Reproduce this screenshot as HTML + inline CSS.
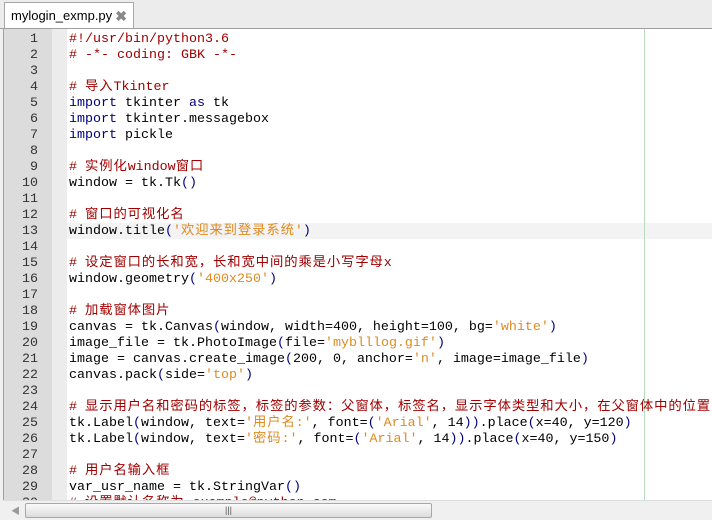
<!DOCTYPE html>
<html><head><meta charset="utf-8"><style>
body{margin:0;width:712px;height:520px;overflow:hidden;background:#f0f0f0;position:relative;font-family:"Liberation Sans","Noto Sans CJK SC",sans-serif}
.tabbar{position:absolute;left:0;top:0;width:712px;height:28px;background:#ececec;border-bottom:1px solid #a0a0a0}
.tab{position:absolute;left:4px;top:2px;width:130px;height:26px;background:#fff;border:1px solid #a8a8a8;border-bottom:none;font-size:13px;line-height:26px;padding-left:6px;box-sizing:border-box;color:#000}
.tab .x{position:absolute;right:6px;top:0;color:#888;font-weight:bold;font-size:14px}
.ed{position:absolute;left:3px;top:29px;width:709px;height:471px;background:#fff;overflow:hidden;border-left:1px solid #a0a0a0}
.g1{position:absolute;left:0;top:0;width:48px;height:100%;background:#dcdcdc}
.g2{position:absolute;left:48px;top:0;width:15px;height:100%;background:#ececec}
.vl{position:absolute;left:640px;top:0;width:1px;height:100%;background:#b8dcc0}
.hl{position:absolute;left:63px;top:194px;width:650px;height:16px;background:#f3f3f3}
.nums{position:absolute;left:0;top:3px;width:34px;text-align:right;font:13.33px/16px "Liberation Mono",monospace;color:#333}
.code{position:absolute;left:65px;top:3px;font:13.33px/16px "Liberation Mono","Noto Sans CJK SC",monospace;color:#000;white-space:pre}
.z{letter-spacing:0.9px}
.c{color:#a00000}.k{color:#00007f}.s{color:#e08a20}.p{color:#00007f}
.sb{position:absolute;left:3px;top:500px;width:709px;height:19px;background:#f0f0f0;border-top:1px solid #ddd}
.th{position:absolute;left:22px;top:2px;width:405px;height:13px;background:linear-gradient(#fafafa,#dcdcdc);border:1px solid #a8a8a8;border-radius:2px;text-align:center;font-size:9px;line-height:13px;color:#555}
.arr{position:absolute;left:8px;top:3px;font-size:9px;color:#999}
</style></head><body>
<div class="tabbar"><div class="tab">mylogin_exmp.py<span class="x">✖</span></div></div>
<div class="ed">
<div class="g1"></div><div class="g2"></div><div class="hl"></div><div class="vl"></div>
<div class="nums">1<br>2<br>3<br>4<br>5<br>6<br>7<br>8<br>9<br>10<br>11<br>12<br>13<br>14<br>15<br>16<br>17<br>18<br>19<br>20<br>21<br>22<br>23<br>24<br>25<br>26<br>27<br>28<br>29<br>30</div>
<div class="code"><span class="c">#!/usr/bin/python3.6</span>
<span class="c"># -*- coding: GBK -*-</span>

<span class="c"># <span class="z">导入</span>Tkinter</span>
<span class="k">import</span> tkinter <span class="k">as</span> tk
<span class="k">import</span> tkinter.messagebox
<span class="k">import</span> pickle

<span class="c"># <span class="z">实例化</span>window<span class="z">窗口</span></span>
window = tk.Tk<span class="p">()</span>

<span class="c"># <span class="z">窗口的可视化名</span></span>
window.title<span class="p">(</span><span class="s">'<span class="z">欢迎来到登录系统</span>'</span><span class="p">)</span>

<span class="c"># <span class="z">设定窗口的长和宽，长和宽中间的乘是小写字母</span>x</span>
window.geometry<span class="p">(</span><span class="s">'400x250'</span><span class="p">)</span>

<span class="c"># <span class="z">加载窗体图片</span></span>
canvas = tk.Canvas<span class="p">(</span>window, width=400, height=100, bg=<span class="s">'white'</span><span class="p">)</span>
image_file = tk.PhotoImage<span class="p">(</span>file=<span class="s">'myblllog.gif'</span><span class="p">)</span>
image = canvas.create_image<span class="p">(</span>200, 0, anchor=<span class="s">'n'</span>, image=image_file<span class="p">)</span>
canvas.pack<span class="p">(</span>side=<span class="s">'top'</span><span class="p">)</span>

<span class="c"># <span class="z">显示用户名和密码的标签，标签的参数：父窗体，标签名，显示字体类型和大小，在父窗体中的位置</span></span>
tk.Label<span class="p">(</span>window, text=<span class="s">'<span class="z">用户名</span>:'</span>, font=<span class="p">(</span><span class="s">'Arial'</span>, 14<span class="p">))</span>.place<span class="p">(</span>x=40, y=120<span class="p">)</span>
tk.Label<span class="p">(</span>window, text=<span class="s">'<span class="z">密码</span>:'</span>, font=<span class="p">(</span><span class="s">'Arial'</span>, 14<span class="p">))</span>.place<span class="p">(</span>x=40, y=150<span class="p">)</span>

<span class="c"># <span class="z">用户名输入框</span></span>
var_usr_name = tk.StringVar<span class="p">()</span>
<span class="c"># <span class="z">设置默认名称为</span> example@python.com</span></div>
</div>
<div class="sb"><span class="arr">◀</span><div class="th">|||</div></div>
</body></html>
